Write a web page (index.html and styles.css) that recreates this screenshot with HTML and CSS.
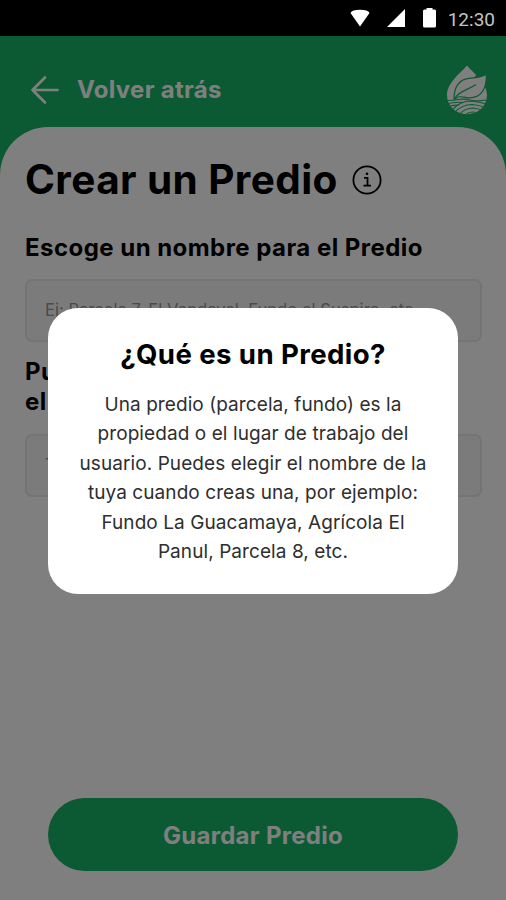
FILE: index.html
```html
<!DOCTYPE html>
<html lang="es">
<head>
    <meta charset="UTF-8">
    <title>Crear un Predio</title>
    <link rel="stylesheet" href="styles.css">
</head>
<body>
    <div class="status-bar">
        <svg class="wifi" width="20" height="18" viewBox="0 0 20 18"><path d="M0.5 4 Q2 0.8 10 0.8 Q18 0.8 19.5 4 L10 17.5 Z" fill="#fff"/></svg>
        <svg class="signal" width="18" height="18" viewBox="0 0 18 18"><path d="M18 0 V18 H0 Z" fill="#fff"/></svg>
        <svg class="battery" width="13" height="20" viewBox="0 0 13 20"><path d="M3.5 0 H9.5 V1.5 H11.5 Q13 1.5 13 3 V18 Q13 19.5 11.5 19.5 H1.5 Q0 19.5 0 18 V3 Q0 1.5 1.5 1.5 H3.5 Z" fill="#fff"/></svg>
        <span class="time">12:30</span>
    </div>

    <div class="screen">
        <header class="header">
            <a class="back" href="#">
                <svg width="30" height="30" viewBox="0 0 30 30" fill="none" stroke="#fff" stroke-width="2.7" stroke-linecap="round" stroke-linejoin="round"><path d="M27.5 15 H2.5 M15 2.5 L2.5 15 L15 27.5"/></svg>
                <span>Volver atrás</span>
            </a>
            <svg class="logo" width="42" height="50" viewBox="0 0 42 50">
                <defs>
                    <clipPath id="drop"><path d="M21 0.5 C25 6 41 17 41 30 A20 19.3 0 0 1 1 30 C1 17 17 6 21 0.5 Z"/></clipPath>
                </defs>
                <g clip-path="url(#drop)">
                    <rect width="42" height="50" fill="#fff"/>
                    <path d="M34 0 H42 V21 L37 24 L28 14 Z" fill="#18b466"/>
                    <g fill="none" stroke="#18b466" stroke-width="1.1">
                        <path d="M0 35.5 Q7 35.5 12 34.5 Q18 33.5 24 35 Q33 37 42 34.5"/>
                        <path d="M0 39 Q9 36.5 17 37.5"/>
                        <path d="M0 43 Q6 39.5 13 40"/>
                        <path d="M6 45 Q14 36 25 36 Q34 37 42 39.5"/>
                        <path d="M8 48 Q16 39.5 26 39.5 Q34 40 40 43"/>
                        <path d="M13 49.5 Q19 43 27 43 Q33 43.5 38 46.5"/>
                        <path d="M19 50 Q26 44.5 33 49"/>
                    </g>
                </g>
                <path d="M40.3 9 C41 24 35 33 23 32.8 C18 32.6 15 31 12 32 L8 34.5 C8 25 11 14.5 24 13.2 C31 12.5 36 12.5 40.3 9 Z" fill="#fff" stroke="#18b466" stroke-width="1.2"/>
                <path d="M9 33 C13 26 21 25.5 30 19.5" fill="none" stroke="#18b466" stroke-width="1.2"/>
            </svg>
        </header>

        <main class="sheet">
            <div class="title">
                <h1>Crear un Predio</h1>
                <svg width="30" height="30" viewBox="0 0 30 30"><circle cx="15" cy="15" r="13.6" fill="none" stroke="#000" stroke-width="1.8"/><circle cx="15" cy="8.7" r="1.3"/><path d="M12 12.8 H15.5 V20.5 M11.5 20.6 H19" fill="none" stroke="#000" stroke-width="1.8"/></svg>
            </div>
            <label class="label" for="nombre">Escoge un nombre para el Predio</label>
            <input class="field" id="nombre" type="text" placeholder="Ej: Parcela 7, El Vendaval, Fundo el Suspiro, etc.">
            <label class="label second" for="tipo">Puedes escoger un tipo para<br>el Predio</label>
            <input class="field" id="tipo" type="text" placeholder="Tipo de Predio">
            <button class="save">Guardar Predio</button>
        </main>

        <div class="overlay">
            <div class="modal">
                <h2>¿Qué es un Predio?</h2>
                <p>Una predio (parcela, fundo) es la<br>propiedad o el lugar de trabajo del<br>usuario. Puedes elegir el nombre de la<br>tuya cuando creas una, por ejemplo:<br>Fundo La Guacamaya, Agrícola El<br>Panul, Parcela 8, etc.</p>
            </div>
        </div>
    </div>
</body>
</html>
```
FILE: styles.css
```css
* {
    box-sizing: border-box;
}
body {
    margin: 0;
    height: 900px;
    display: flex;
    flex-direction: column;
    font-family: Inter, "Liberation Sans", sans-serif;
    color: #000;
    overflow: hidden;
}
h1, h2, p {
    margin: 0;
}
.status-bar {
    height: 36px;
    padding-right: 11px;
    display: flex;
    align-items: center;
    justify-content: flex-end;
    background-color: #000;
}
.signal {
    margin-left: 17px;
}
.battery {
    margin-left: 18px;
}
.time {
    margin-left: 12px;
    padding-top: 3px;
    font-family: Roboto, sans-serif;
    font-size: 19px;
    line-height: 22px;
    color: #c4c4c4;
}
.screen {
    position: relative;
    flex: 1;
    display: flex;
    flex-direction: column;
    background-color: #18b466;
}
.header {
    height: 91px;
    padding: 17px 18px 0 30px;
    display: flex;
    align-items: center;
    justify-content: space-between;
}
.back {
    display: flex;
    align-items: center;
    gap: 17px;
    font-size: 24px;
    font-weight: 700;
    line-height: 30px;
    letter-spacing: 0.3px;
    color: #fff;
    text-decoration: none;
}
.back span {
    padding-bottom: 1px;
}
.sheet {
    flex: 1;
    display: flex;
    flex-direction: column;
    padding: 28px 24px 29px 25px;
    border-radius: 48px 48px 0 0;
    background-color: #fff;
}
.title {
    display: flex;
    align-items: center;
    gap: 14px;
    height: 50px;
}
.title h1 {
    font-size: 40.5px;
    font-weight: 700;
    line-height: 50px;
    letter-spacing: 0.4px;
}
.label {
    margin-top: 28px;
    font-size: 24px;
    font-weight: 700;
    line-height: 30px;
    letter-spacing: 0.46px;
}
.label.second {
    margin-top: 15px;
}
.field {
    height: 63px;
    margin-top: 16px;
    padding: 0 18px 2px;
    border: 2px solid #e8e8e8;
    border-radius: 7px;
    background-color: #f7f7f7;
    font-family: inherit;
    font-size: 16.6px;
}
.second + .field {
    margin-top: 17px;
}
.field::placeholder {
    color: #969696;
}
.save {
    height: 73px;
    margin: auto 24px 0 23px;
    padding-top: 3px;
    border: 0;
    border-radius: 37px;
    background-color: #18b466;
    font-family: inherit;
    font-size: 24px;
    font-weight: 700;
    letter-spacing: 0.3px;
    color: #fff;
}
.overlay {
    position: absolute;
    top: 0;
    right: 0;
    bottom: 0;
    left: 0;
    display: flex;
    justify-content: center;
    align-items: flex-start;
    padding-top: 272px;
    background-color: rgba(0, 0, 0, 0.5);
}
.modal {
    width: 410px;
    height: 286px;
    padding-top: 26px;
    border-radius: 30px;
    background-color: #fff;
    text-align: center;
}
.modal h2 {
    font-size: 27.6px;
    font-weight: 700;
    line-height: 40px;
    letter-spacing: 0.4px;
}
.modal p {
    margin-top: 16px;
    font-size: 19px;
    line-height: 29.4px;
    letter-spacing: 0.08px;
    color: #2e2e2e;
}
```
